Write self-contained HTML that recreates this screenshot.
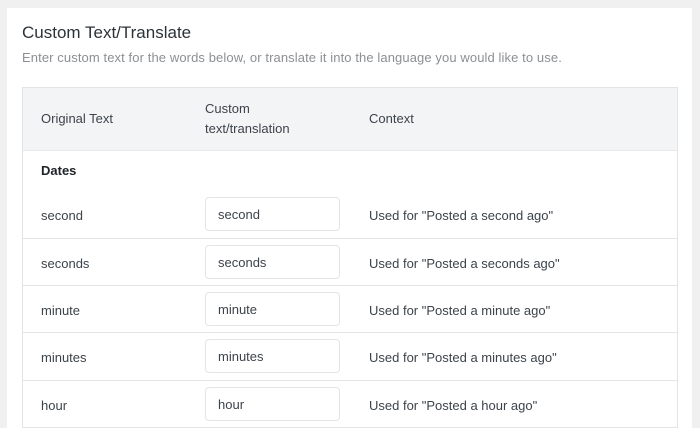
<!DOCTYPE html>
<html style="overflow:hidden;height:428px"><head><style>
body{margin:0;width:700px;height:428px;background:#f0f0f1;font-family:"Liberation Sans",sans-serif;overflow:hidden;position:relative}
.card{position:absolute;left:7px;top:8px;width:685px;height:420px;background:#fff}
h1{position:absolute;left:22px;top:23px;margin:0;font-size:17px;font-weight:normal;color:#2c3338}
.sub{position:absolute;left:22px;top:50px;font-size:13px;letter-spacing:0.1px;color:#8c8f94}
.tbl{position:absolute;left:22px;top:87px;width:656px;height:341px;border:1px solid #e2e4e7;border-bottom:none;box-sizing:border-box}
.head{position:absolute;left:0;top:0;width:100%;height:62px;background:#f3f4f5;border-bottom:1px solid #e8e9eb}
.t{position:absolute;font-size:13px;color:#3c434a;white-space:nowrap}
.row{position:absolute;left:0;width:100%;border-bottom:1px solid #e2e4e7}
.inp{position:absolute;left:182px;width:135px;height:34px;border:1px solid #e2e4e7;border-radius:4px;box-sizing:border-box;font-size:13px;color:#3c434a;padding-left:12px;line-height:34px}
</style></head><body>
<div class="card"></div>
<h1>Custom Text/Translate</h1>
<div class="sub">Enter custom text for the words below, or translate it into the language you would like to use.</div>
<div class="tbl">
<div class="head"></div>
<div class="t" style="left:18px;top:23px">Original Text</div>
<div class="t" style="left:182px;top:13px">Custom</div>
<div class="t" style="left:182px;top:33px">text/translation</div>
<div class="t" style="left:346px;top:23px">Context</div>
<div class="t" style="left:18px;top:75px;font-weight:bold;color:#1d2327">Dates</div>

<div class="row" style="top:103px;height:47px"></div>
<div class="t" style="left:18px;top:120px">second</div><div class="inp" style="top:109px">second</div><div class="t" style="left:346px;top:120px">Used for "Posted a second ago"</div>
<div class="row" style="top:150px;height:47px"></div>
<div class="t" style="left:18px;top:168px">seconds</div><div class="inp" style="top:157px">seconds</div><div class="t" style="left:346px;top:168px">Used for "Posted a seconds ago"</div>
<div class="row" style="top:197px;height:47px"></div>
<div class="t" style="left:18px;top:215px">minute</div><div class="inp" style="top:204px">minute</div><div class="t" style="left:346px;top:215px">Used for "Posted a minute ago"</div>
<div class="row" style="top:244px;height:48px"></div>
<div class="t" style="left:18px;top:262px">minutes</div><div class="inp" style="top:251px">minutes</div><div class="t" style="left:346px;top:262px">Used for "Posted a minutes ago"</div>
<div class="row" style="top:292px;height:47px"></div>
<div class="t" style="left:18px;top:310px">hour</div><div class="inp" style="top:299px">hour</div><div class="t" style="left:346px;top:310px">Used for "Posted a hour ago"</div>
</div>
</body></html>
